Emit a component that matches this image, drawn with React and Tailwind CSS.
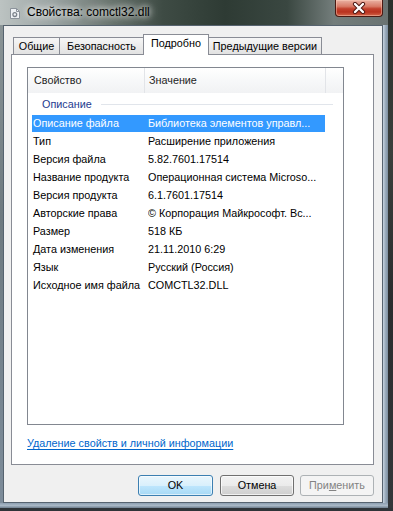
export default function App() {
  const rows = [
    ["Описание файла", "Библиотека элементов управл...", true],
    ["Тип", "Расширение приложения"],
    ["Версия файла", "5.82.7601.17514"],
    ["Название продукта", "Операционная система Microso..."],
    ["Версия продукта", "6.1.7601.17514"],
    ["Авторские права", "© Корпорация Майкрософт. Вс..."],
    ["Размер", "518 КБ"],
    ["Дата изменения", "21.11.2010 6:29"],
    ["Язык", "Русский (Россия)"],
    ["Исходное имя файла", "COMCTL32.DLL"],
  ];

  return (
    <div className="w-[393px] h-[511px] overflow-hidden bg-[linear-gradient(to_bottom,#2c3330,#262b2a_60%,#30353a)] font-['Liberation_Sans',Arial,sans-serif] text-black">
      <div className="flex">
        {/* window */}
        <div className="w-[388px] h-[508px] flex flex-col">
          {/* title bar */}
          <div className="h-[25px] flex items-start bg-[linear-gradient(to_right,#bcc3c2,#9aa3a2_14%,#6b7670_28%,#3e4b44_42%,#2e3b34_58%,#3a4741_74%,#737d7b_86%,#6a7372_100%)]">
            <svg className="mt-[8px] ml-[10px]" width="10" height="11" viewBox="0 0 10 11">
              <path d="M0.5 0.5h6l3 3v7h-9z" fill="#eef1f4" stroke="#8c939b" />
              <path d="M6.5 0.5v3h3" fill="none" stroke="#8c939b" />
              <circle cx="4.8" cy="6.6" r="1.9" fill="none" stroke="#7b828b" strokeWidth="1.3" />
            </svg>
            <div className="ml-[7px] mt-[4px] text-[12px] leading-[16px] [text-shadow:0_0_6px_#ffffff,0_0_10px_#ffffff]">
              Свойства: comctl32.dll
            </div>
            <div className="ml-auto mr-[5px] w-[48px] h-[17px] rounded-b-[4px] border border-t-0 border-[#4a1912] bg-[linear-gradient(to_bottom,#eab2a4,#d87a66_40%,#c2402c_55%,#b9321f_75%,#d2654a)] flex items-center justify-center shadow-[inset_0_0_0_1px_rgba(255,210,190,0.45)]">
              <svg width="14" height="12" viewBox="0 0 14 12">
                <path d="M3 2L11 10M11 2L3 10" stroke="#4a1510" strokeWidth="4.2" strokeLinecap="round" />
                <path d="M3 2L11 10M11 2L3 10" stroke="#ffffff" strokeWidth="2.4" strokeLinecap="round" />
              </svg>
            </div>
          </div>

          <div className="flex h-[478px]">
            <div className="w-[3px] bg-[linear-gradient(to_bottom,#8a9496,#6e7a80_40%,#7d8c9a)]" />
            {/* client */}
            <div className="w-[380px] h-[478px] border border-[#56636f] bg-[#f0f0f0] flex flex-col">
              {/* tabs */}
              <div className="mt-[8px] ml-[9px] h-[20px] flex items-end text-[10.8px] leading-[13px] relative z-10">
                <div className="w-[47px] h-[17px] border border-b-0 border-[#898c95] bg-[linear-gradient(to_bottom,#f6f6f6,#e2e2e2)] flex items-center justify-center">
                  Общие
                </div>
                <div className="w-[85px] h-[17px] -ml-px border border-b-0 border-[#898c95] bg-[linear-gradient(to_bottom,#f6f6f6,#e2e2e2)] flex items-center justify-center">
                  Безопасность
                </div>
                <div className="w-[66px] h-[21px] -ml-px -mb-px border border-b-0 border-[#898c95] bg-white flex items-center justify-center pb-[3px]">
                  Подробно
                </div>
                <div className="w-[114px] h-[17px] -ml-px border border-b-0 border-[#898c95] bg-[linear-gradient(to_bottom,#f6f6f6,#e2e2e2)] flex items-center justify-center">
                  Предыдущие версии
                </div>
              </div>

              {/* tab page */}
              <div className="ml-[7px] w-[363px] h-[411px] border border-[#898c95] bg-white pt-[12px] pl-[15px] flex flex-col">
                <div className="w-[317px] h-[358px] border border-[#828790] bg-white flex flex-col text-[10.8px]">
                  {/* header */}
                  <div className="h-[25px] flex bg-[linear-gradient(to_bottom,#ffffff,#f7f8f9_50%,#f1f2f4)]">
                    <div className="w-[117px] border-r border-[#e2e4e8] flex items-center pl-[6px] text-[#1e1e1e]">
                      Свойство
                    </div>
                    <div className="w-[181px] border-r border-[#e2e4e8] flex items-center pl-[4px] text-[#1e1e1e]">
                      Значение
                    </div>
                    <div className="flex-1" />
                  </div>
                  {/* group */}
                  <div className="h-[22px] flex items-center pl-[14px] pr-[10px]">
                    <span className="text-[#1e3a8f]">Описание</span>
                    <div className="ml-[9px] flex-1 h-px bg-[#e1e5eb]" />
                  </div>
                  {/* rows */}
                  {rows.map(([k, v, sel]) => (
                    <div key={k} className="h-[18px] flex items-start">
                      <div
                        className={
                          sel
                            ? "ml-[4px] w-[293px] h-[17px] flex items-center bg-[#3399ff] text-white"
                            : "ml-[4px] w-[293px] h-[17px] flex items-center"
                        }
                      >
                        <div className="w-[116px] pl-[1px] whitespace-nowrap overflow-hidden">{k}</div>
                        <div className="flex-1 whitespace-nowrap overflow-hidden">{v}</div>
                      </div>
                    </div>
                  ))}
                </div>
                <div className="mt-[11px] text-[10.8px] leading-[14px] text-[#0066cc] underline underline-offset-[2px]">
                  Удаление свойств и личной информации
                </div>
              </div>

              {/* buttons */}
              <div className="mt-[10px] flex justify-end pr-[8px] text-[10.8px]">
                <div className="w-[75px] h-[21px] rounded-[3px] border border-[#3c7fb1] bg-[linear-gradient(to_bottom,#eaf6fd,#d9f0fc_50%,#bee6fd_51%,#a7d9f5)] shadow-[inset_0_0_0_1px_rgba(255,255,255,0.6)] flex items-center justify-center">
                  OK
                </div>
                <div className="ml-[7px] w-[74px] h-[21px] rounded-[3px] border border-[#707070] bg-[linear-gradient(to_bottom,#f2f2f2,#ebebeb_50%,#dddddd_51%,#cfcfcf)] shadow-[inset_0_0_0_1px_rgba(255,255,255,0.7)] flex items-center justify-center">
                  Отмена
                </div>
                <div className="ml-[6px] w-[74px] h-[21px] rounded-[3px] border border-[#adb2b5] bg-[#f4f4f4] text-[#838383] flex items-center justify-center">
                  При<span className="underline">м</span>енить
                </div>
              </div>
            </div>
            <div className="w-[5px] bg-[linear-gradient(to_right,#c6d3df,#9aabbb_50%,#7c8ea0)]" />
          </div>
          <div className="h-[5px] bg-[linear-gradient(to_bottom,#8d9fb1,#a9b8c6_50%,#6f7f8f)]" />
        </div>
        <div className="w-[5px] h-[508px] bg-[linear-gradient(to_bottom,#2a302c,#3a3f3c_30%,#2a2c2e_60%,#33373a)]" />
      </div>
      <div className="h-[3px] bg-[#2f3438]" />
    </div>
  );
}
